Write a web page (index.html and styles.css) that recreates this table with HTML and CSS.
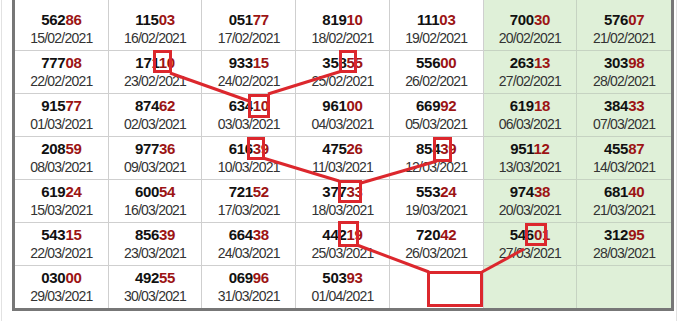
FILE: index.html
```html
<!DOCTYPE html>
<html>
<head>
<meta charset="utf-8">
<link rel="stylesheet" href="styles.css">
</head>
<body>
<div class="shell">
  <table class="results">
    <colgroup>
      <col><col><col><col><col><col class="wk"><col class="wk">
    </colgroup>
    <tbody>
      <tr class="first">
        <td><b>562<i>86</i></b><span>15/02/2021</span></td>
        <td><b>115<i>03</i></b><span>16/02/2021</span></td>
        <td><b>051<i>77</i></b><span>17/02/2021</span></td>
        <td><b>819<i>10</i></b><span>18/02/2021</span></td>
        <td><b>111<i>03</i></b><span>19/02/2021</span></td>
        <td class="g"><b>700<i>30</i></b><span>20/02/2021</span></td>
        <td class="g"><b>576<i>07</i></b><span>21/02/2021</span></td>
      </tr>
      <tr>
        <td><b>777<i>08</i></b><span>22/02/2021</span></td>
        <td><b>171<i>10</i></b><span>23/02/2021</span></td>
        <td><b>933<i>15</i></b><span>24/02/2021</span></td>
        <td><b>358<i>55</i></b><span>25/02/2021</span></td>
        <td><b>556<i>00</i></b><span>26/02/2021</span></td>
        <td class="g"><b>263<i>13</i></b><span>27/02/2021</span></td>
        <td class="g"><b>303<i>98</i></b><span>28/02/2021</span></td>
      </tr>
      <tr>
        <td><b>915<i>77</i></b><span>01/03/2021</span></td>
        <td><b>874<i>62</i></b><span>02/03/2021</span></td>
        <td><b>634<i>10</i></b><span>03/03/2021</span></td>
        <td><b>961<i>00</i></b><span>04/03/2021</span></td>
        <td><b>669<i>92</i></b><span>05/03/2021</span></td>
        <td class="g"><b>619<i>18</i></b><span>06/03/2021</span></td>
        <td class="g"><b>384<i>33</i></b><span>07/03/2021</span></td>
      </tr>
      <tr>
        <td><b>208<i>59</i></b><span>08/03/2021</span></td>
        <td><b>977<i>36</i></b><span>09/03/2021</span></td>
        <td><b>616<i>39</i></b><span>10/03/2021</span></td>
        <td><b>475<i>26</i></b><span>11/03/2021</span></td>
        <td><b>854<i>39</i></b><span>12/03/2021</span></td>
        <td class="g"><b>951<i>12</i></b><span>13/03/2021</span></td>
        <td class="g"><b>455<i>87</i></b><span>14/03/2021</span></td>
      </tr>
      <tr>
        <td><b>619<i>24</i></b><span>15/03/2021</span></td>
        <td><b>600<i>54</i></b><span>16/03/2021</span></td>
        <td><b>721<i>52</i></b><span>17/03/2021</span></td>
        <td><b>377<i>33</i></b><span>18/03/2021</span></td>
        <td><b>553<i>24</i></b><span>19/03/2021</span></td>
        <td class="g"><b>974<i>38</i></b><span>20/03/2021</span></td>
        <td class="g"><b>681<i>40</i></b><span>21/03/2021</span></td>
      </tr>
      <tr>
        <td><b>543<i>15</i></b><span>22/03/2021</span></td>
        <td><b>856<i>39</i></b><span>23/03/2021</span></td>
        <td><b>664<i>38</i></b><span>24/03/2021</span></td>
        <td><b>442<i>19</i></b><span>25/03/2021</span></td>
        <td><b>720<i>42</i></b><span>26/03/2021</span></td>
        <td class="g"><b>546<i>01</i></b><span>27/03/2021</span></td>
        <td class="g"><b>312<i>95</i></b><span>28/03/2021</span></td>
      </tr>
      <tr class="last">
        <td><b>030<i>00</i></b><span>29/03/2021</span></td>
        <td><b>492<i>55</i></b><span>30/03/2021</span></td>
        <td><b>069<i>96</i></b><span>31/03/2021</span></td>
        <td><b>503<i>93</i></b><span>01/04/2021</span></td>
        <td></td>
        <td class="g"></td>
        <td class="g"></td>
      </tr>
    </tbody>
  </table>
  <svg class="marks" width="682" height="321" viewBox="0 0 682 321">
    <g fill="none" stroke="#dc272d" stroke-width="3">
      <rect x="154.5" y="51.5" width="16" height="20"/>
      <rect x="340.5" y="51.5" width="15" height="20"/>
      <rect x="249.5" y="95.5" width="19" height="21"/>
      <rect x="248.5" y="138.5" width="15" height="20"/>
      <rect x="434.5" y="138.5" width="16" height="22"/>
      <rect x="339.5" y="181.5" width="21" height="20"/>
      <rect x="339.5" y="222.5" width="18" height="23"/>
      <rect x="428.5" y="272.5" width="53" height="33"/>
      <rect x="526.5" y="224.5" width="19" height="20"/>
      <line x1="170" y1="73" x2="249" y2="101"/>
      <line x1="268" y1="94" x2="342" y2="71"/>
      <line x1="263" y1="158" x2="339" y2="181"/>
      <line x1="437" y1="161" x2="361" y2="183"/>
      <line x1="357" y1="245" x2="429" y2="272"/>
      <line x1="524" y1="249" x2="482" y2="272"/>
    </g>
  </svg>
</div>
</body>
</html>
```
FILE: styles.css
```css
html, body {
  margin: 0;
  padding: 0;
  background: #ffffff;
}

.shell {
  position: relative;
  width: 664px;
  height: 321px;
  margin-left: 1px;
  border-left: 1px solid #e2e2e2;
  border-right: 1px solid #e2e2e2;
  padding-left: 10px;
  box-sizing: content-box;
  font-family: "Liberation Sans", Arial, sans-serif;
}

.results {
  width: 662px;
  table-layout: fixed;
  border-collapse: separate;
  border-spacing: 0;
  border: 3px solid #777777;
  border-top: none;
  background: #ffffff;
}

.results td {
  height: 36px;
  padding: 3px 0 3px;
  text-align: center;
  vertical-align: top;
  border-right: 1px solid #cfcfcf;
  border-bottom: 1px solid #cfcfcf;
  line-height: 18px;
}

.results td:last-child {
  border-right: none;
}

.results tr.last td {
  border-bottom: none;
}

.results tr.first td {
  padding-top: 11px;
}

.results td.g {
  background: #dff0d8;
  border-color: #c6d3c2;
}

.results b {
  display: block;
  font-size: 15px;
  letter-spacing: -0.3px;
  font-weight: bold;
  color: #111111;
}

.results b i {
  font-style: normal;
  color: #9c1414;
}

.results span {
  display: block;
  font-size: 14px;
  letter-spacing: -0.8px;
  color: #333333;
}

.marks {
  position: absolute;
  left: -2px;
  top: 0;
  pointer-events: none;
}
```
